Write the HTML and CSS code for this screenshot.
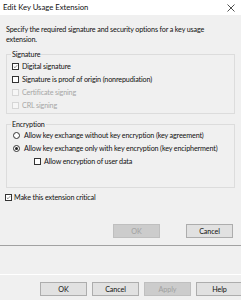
FILE: index.html
```html
<!DOCTYPE html>
<html lang="en">
<head>
    <meta charset="UTF-8">
    <meta name="viewport" content="width=device-width, initial-scale=1.0">
    <title>Edit Key Usage Extension</title>
    <link rel="stylesheet" href="styles.css">
</head>
<body>
    <div class="dialog">
        <div class="titlebar">
            <span class="title">Edit Key Usage Extension</span>
            <svg class="close" width="8" height="8" viewBox="0 0 8 8">
                <path d="M0.5 0.5 L7.5 7.5 M7.5 0.5 L0.5 7.5" stroke="#222" stroke-width="0.8" fill="none"/>
            </svg>
        </div>
        <div class="content">
            <p class="intro">Specify the required signature and security options for a key usage extension.</p>

            <fieldset class="group sig">
                <legend>Signature</legend>
                <div class="row"><span class="box"><svg viewBox="0 0 8 8"><path d="M1.3 4.2 L3.2 6 L6.8 1.8" stroke="#222" stroke-width="0.8" fill="none"/></svg></span>Digital signature</div>
                <div class="row"><span class="box"></span>Signature is proof of origin (nonrepudiation)</div>
                <div class="row off"><span class="box"></span>Certificate signing</div>
                <div class="row off"><span class="box"></span>CRL signing</div>
            </fieldset>

            <fieldset class="group enc">
                <legend>Encryption</legend>
                <div class="row"><span class="radio"></span>Allow key exchange without key encryption (key agreement)</div>
                <div class="row"><span class="radio on"></span>Allow key exchange only with key encryption (key encipherment)</div>
                <div class="row sub"><span class="box"></span>Allow encryption of user data</div>
            </fieldset>

            <div class="row critical"><span class="box"><svg viewBox="0 0 8 8"><path d="M1.3 4.2 L3.2 6 L6.8 1.8" stroke="#222" stroke-width="0.8" fill="none"/></svg></span>Make this extension critical</div>

            <div class="actions">
                <button class="btn" disabled>OK</button>
                <button class="btn">Cancel</button>
            </div>
        </div>
    </div>

    <div class="sheet">
        <div class="page"></div>
        <div class="sheet-actions">
            <button class="btn">OK</button>
            <button class="btn">Cancel</button>
            <button class="btn" disabled>Apply</button>
            <button class="btn">Help</button>
        </div>
    </div>
</body>
</html>
```

FILE: styles.css
```css
body {
    margin: 0;
    background-color: #f0f0f0;
    font-family: Lato, "Liberation Sans", sans-serif;
    font-size: 7.2px;
    letter-spacing: -0.15px;
    color: #111;
    width: 241px;
    height: 300px;
    overflow: hidden;
}
.dialog {
    height: 246px;
    border-bottom: 1px solid #a2a2a2;
    box-sizing: border-box;
    display: flex;
    flex-direction: column;
}
.titlebar {
    height: 15px;
    background: white;
    display: flex;
    align-items: center;
    justify-content: space-between;
    padding: 0 6px 0 3px;
}
.title {
    font-size: 7.7px;
    letter-spacing: 0;
    line-height: 15px;
}
.close {
    display: block;
}
.content {
    padding: 10px 6px 0 6px;
    display: flex;
    flex-direction: column;
}
.intro {
    margin: 0;
    line-height: 9.5px;
    max-width: 215px;
}
.group {
    margin: 6px 0 0 0;
    padding: 0 4px 1px 5px;
    border: 1px solid #dcdcdc;
    min-inline-size: 0;
}
.group legend {
    padding: 0 1px;
    margin-left: -1px;
    line-height: 9.5px;
}
.enc {
    padding-bottom: 19px;
}
.row {
    height: 13px;
    display: flex;
    align-items: center;
    white-space: nowrap;
}
.box {
    width: 7px;
    height: 7px;
    border: 1px solid #333;
    background: white;
    box-sizing: border-box;
    margin-right: 3px;
    flex: none;
    display: flex;
}
.box svg {
    width: 100%;
    height: 100%;
}
.off {
    color: #a6a6a6;
}
.off .box {
    border-color: #d6d6d6;
    background: #f6f6f6;
}
.radio {
    width: 7px;
    height: 7px;
    border: 1px solid #333;
    border-radius: 50%;
    background: white;
    box-sizing: border-box;
    margin: 0 4px 0 1px;
    flex: none;
    display: flex;
    align-items: center;
    justify-content: center;
}
.radio.on::after {
    content: "";
    width: 3px;
    height: 3px;
    border-radius: 50%;
    background: #222;
}
.sub {
    padding-left: 22px;
}
.critical {
    margin-top: 3px;
    margin-left: -1px;
}
.critical .box {
    margin-right: 2px;
}
.actions {
    display: flex;
    justify-content: flex-end;
    gap: 26px;
    margin-top: 20px;
    padding-right: 2px;
}
.btn {
    width: 47px;
    height: 14px;
    padding: 0;
    font-family: inherit;
    font-size: 7.2px;
    letter-spacing: -0.1px;
    color: #111;
    background: #e1e1e1;
    border: 1px solid #adadad;
    border-radius: 0;
}
.btn:disabled {
    background: #cccccc;
    border-color: #bfbfbf;
    color: #a0a0a0;
}
.sheet {
    display: flex;
    flex-direction: column;
}
.page {
    height: 28px;
    border-bottom: 1px solid #ffffff;
}
.sheet-actions {
    display: flex;
    gap: 5px;
    padding: 7px 0 0 40px;
}
.sheet-actions .btn {
    flex: none;
}
```
